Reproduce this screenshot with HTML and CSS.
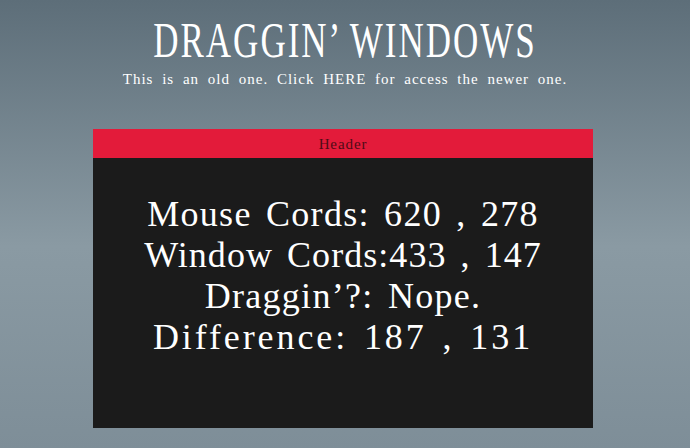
FILE: index.html
```html
<!DOCTYPE html>
<html>
<head>
<meta charset="utf-8">
<title>Draggin' Windows</title>
<link rel="stylesheet" href="styles.css">
</head>
<body>
  <h1 class="title">DRAGGIN’ WINDOWS</h1>
  <p class="subtitle">This is an old one. Click HERE for access the newer one.</p>
  <div class="window">
    <div class="window-header"><span class="header-label">Header</span></div>
    <div class="window-body">
      <div class="stats">
        <div class="stat">Mouse Cords: 620 , 278</div>
        <div class="stat stat-tight">Window Cords:433 , 147</div>
        <div class="stat">Draggin’?: Nope.</div>
        <div class="stat stat-wide">Difference: 187 , 131</div>
      </div>
    </div>
  </div>
</body>
</html>
```
FILE: styles.css
```css
html, body {
  margin: 0;
  padding: 0;
  height: 100%;
}
body {
  background: linear-gradient(to bottom, #5d6e79 0%, #8a9aa3 55%, #7e8e98 100%);
  font-family: "Liberation Serif", "Times New Roman", serif;
  color: #ffffff;
  overflow: hidden;
}
.title {
  margin: 0;
  padding-top: 11px;
  font-size: 35px;
  line-height: 35px;
  letter-spacing: 2px;
  font-weight: normal;
  text-align: center;
  transform: scaleY(1.42);
  transform-origin: top center;
}
.subtitle {
  margin: 25px 0 0;
  font-size: 15px;
  line-height: 16px;
  letter-spacing: 1px;
  word-spacing: 4px;
  text-align: center;
}
.window {
  width: 500px;
  margin: 42px auto 0;
  position: relative;
  left: -2px;
}
.window-header {
  height: 29px;
  background: #e31b3a;
  display: flex;
  align-items: center;
  justify-content: center;
}
.header-label {
  font-size: 15px;
  line-height: 16px;
  letter-spacing: 0.9px;
  color: #4f0b16;
}
.window-body {
  height: 234px;
  padding-top: 36px;
  background: #1b1b1b;
}
.stats {
  font-size: 36px;
  line-height: 41px;
  letter-spacing: 1.3px;
  word-spacing: 4px;
  text-align: center;
}
.stat {
  white-space: pre;
}
.stat-tight {
  letter-spacing: 1.05px;
}
.stat-wide {
  letter-spacing: 2.9px;
}
```
